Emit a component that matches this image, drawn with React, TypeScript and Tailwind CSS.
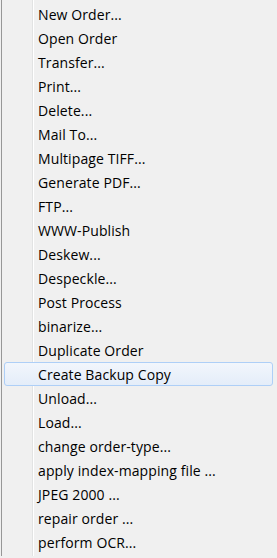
const items = [
  "New Order...",
  "Open Order",
  "Transfer...",
  "Print...",
  "Delete...",
  "Mail To...",
  "Multipage TIFF...",
  "Generate PDF...",
  "FTP...",
  "WWW-Publish",
  "Deskew...",
  "Despeckle...",
  "Post Process",
  "binarize...",
  "Duplicate Order",
  "Create Backup Copy",
  "Unload...",
  "Load...",
  "change order-type...",
  "apply index-mapping file ...",
  "JPEG 2000 ...",
  "repair order ...",
  "perform OCR...",
];

const ACTIVE = 15;

export default function App() {
  return (
    <div className="w-[277px] h-[558px] bg-[#f0f0f0] overflow-hidden" style={{ fontFamily: '"Open Sans", "Noto Sans", sans-serif' }}>
      <div className="h-[556px] ml-[1px] border-l border-[#979797] pt-[2px] bg-[linear-gradient(90deg,#f0f0f0_30px,#e2e3e3_30px,#e2e3e3_31px,#ffffff_31px,#ffffff_32px,#f0f0f0_32px)]">
        <ul className="flex flex-col">
          {items.map((label, i) => (
            <li
              key={label}
              className={
                i === ACTIVE
                  ? "h-[24px] ml-[2px] mr-[4px] flex items-center pl-[33px] text-[14px] tracking-[0.1px] text-black rounded-[3px] border border-[#aecff7] bg-[linear-gradient(180deg,#f2f6fc,#e4edf9)]"
                  : "h-[24px] ml-[2px] mr-[4px] flex items-center pl-[33px] text-[14px] tracking-[0.1px] text-black border border-transparent"
              }
            >
              {label}
            </li>
          ))}
        </ul>
      </div>
    </div>
  );
}
